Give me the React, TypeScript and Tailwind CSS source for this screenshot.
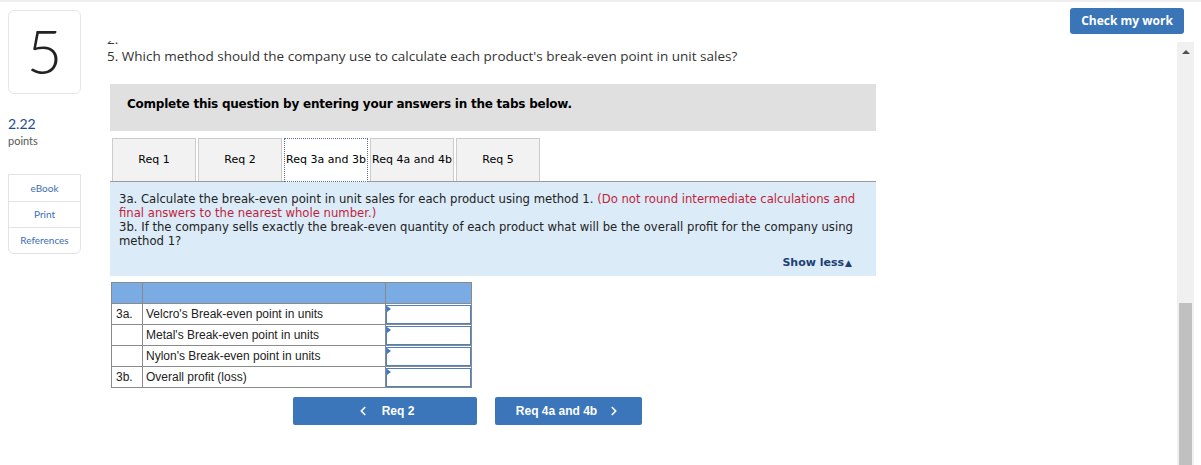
import { ChevronLeft, ChevronRight } from 'lucide-react'

const tabs = ['Req 1', 'Req 2', 'Req 3a and 3b', 'Req 4a and 4b', 'Req 5']

const rows = [
  { tag: '3a.', label: "Velcro's Break-even point in units" },
  { tag: '', label: "Metal's Break-even point in units" },
  { tag: '', label: "Nylon's Break-even point in units" },
  { tag: '3b.', label: 'Overall profit (loss)' },
]

function InputCell() {
  return (
    <td className="border border-[#8a8a8a] p-0 h-[21px]">
      <div className="relative h-[19px] border border-[#4f80bf] bg-white">
        <span className="absolute left-0 top-0 w-0 h-0 border-t-[3px] border-b-[3px] border-l-[4px] border-t-transparent border-b-transparent border-l-[#3f78c4]" />
      </div>
    </td>
  )
}

export default function App() {
  return (
    <div className="relative w-[1201px] h-[465px] overflow-hidden bg-white border-t-2 border-[#eeeeee] font-['Lato',sans-serif]">
      <div className="flex h-full">
        {/* left sidebar */}
        <div className="ml-[8px] w-[73px] pt-[8px] shrink-0">
          <div className="h-[84px] rounded-md border border-[#e6e6e6] flex items-center justify-center">
            <span className="text-[62px] font-light leading-none text-[#222] pb-[4px]">5</span>
          </div>
          <div className="mt-[22px] text-[14px] leading-[16px] text-[#1e4b8f]">2.22</div>
          <div className="mt-[2px] text-[11px] leading-[13px] text-[#555]">points</div>
          <div className="mt-[27px] rounded-b-md border border-[#e3e3e3] text-[10px] text-[#3d6db4]">
            <div className="h-[27px] flex items-center justify-center border-b border-[#e3e3e3]">eBook</div>
            <div className="h-[26px] flex items-center justify-center border-b border-[#e3e3e3]">Print</div>
            <div className="h-[25px] flex items-center justify-center">References</div>
          </div>
        </div>

        {/* main column */}
        <div className="ml-[26px] w-[769px] shrink-0">
          <div className="mt-[39px] h-[5px] overflow-hidden">
            <div className="-mt-[10px] text-[13.5px] leading-[16px] text-[#333] font-['Open_Sans',sans-serif]">2.</div>
          </div>
          <div className="mt-[2px] text-[13.5px] leading-[16px] text-[#333] font-['Open_Sans',sans-serif] whitespace-nowrap">
            5. Which method should the company use to calculate each product's break-even point in unit sales?
          </div>

          <div className="ml-[3px] mt-[20px] w-[766px] h-[47px] bg-[#e0e0e0] flex items-center pl-[17px] pb-[8px] font-['DejaVu_Sans',sans-serif] text-[12px] tracking-[-0.23px] font-bold text-black">
            Complete this question by entering your answers in the tabs below.
          </div>

          {/* tabs */}
          <div className="ml-[3px] mt-[7px] w-[766px] flex gap-[2px] pl-[2px] font-['DejaVu_Sans',sans-serif] text-[11px] text-black">
            {tabs.map((t, i) =>
              i === 2 ? (
                <div
                  key={t}
                  className="w-[84px] h-[44px] -mb-[1px] bg-white border border-dotted border-[#5a6e8c] flex items-center justify-center z-10 whitespace-nowrap"
                >
                  {t}
                </div>
              ) : (
                <div
                  key={t}
                  className="w-[84px] h-[43px] bg-[#f2f2f2] border border-[#cccccc] border-b-0 flex items-center justify-center whitespace-nowrap"
                >
                  {t}
                </div>
              )
            )}
          </div>

          {/* instructions panel */}
          <div className="ml-[3px] w-[766px] h-[95px] bg-[#dbebf8] border-t border-[#9a9a9a] pl-[9px] pr-[8px] pt-[10px] font-['DejaVu_Sans',sans-serif] text-[11.65px] leading-[14px] text-[#222] whitespace-nowrap">
            <div>
              3a. Calculate the break-even point in unit sales for each product using method 1.{' '}
              <span className="text-[#c41e3a]">(Do not round intermediate calculations and</span>
              <br />
              <span className="text-[#c41e3a]">final answers to the nearest whole number.)</span>
              <br />
              3b. If the company sells exactly the break-even quantity of each product what will be the overall profit for the company using
              <br />
              method 1?
            </div>
            <div className="mt-[8px] flex justify-end pr-[16px] text-[11px] font-bold text-[#1d3f72]">
              Show less<span className="text-[9px] ml-[1px]">▲</span>
            </div>
          </div>

          {/* table */}
          <table className="ml-[4px] mt-[6px] border-collapse font-['Liberation_Sans',Arial,sans-serif] text-[12px] text-[#222]">
            <thead>
              <tr className="bg-[#7aabe2] h-[21px]">
                <th className="w-[31px] border border-[#8a8a8a]" />
                <th className="w-[243px] border border-[#8a8a8a]" />
                <th className="w-[86px] border border-[#8a8a8a]" />
              </tr>
            </thead>
            <tbody>
              {rows.map((r) => (
                <tr key={r.label}>
                  <td className="border border-[#8a8a8a] pl-[4px] h-[21px] align-middle">{r.tag}</td>
                  <td className="border border-[#8a8a8a] pl-[3px] align-middle">{r.label}</td>
                  <InputCell />
                </tr>
              ))}
            </tbody>
          </table>

          {/* nav buttons */}
          <div className="mt-[9px] ml-[186px] flex gap-[18px] font-['Liberation_Sans',Arial,sans-serif] text-[12px] font-bold text-white">
            <button className="w-[184px] h-[28px] bg-[#3a76b9] rounded-[2px] flex items-center justify-center gap-[12px]">
              <ChevronLeft className="w-[14px] h-[14px]" strokeWidth={3} />
              Req 2
            </button>
            <button className="w-[147px] h-[28px] bg-[#3a76b9] rounded-[2px] flex items-center justify-center gap-[10px]">
              Req 4a and 4b
              <ChevronRight className="w-[14px] h-[14px]" strokeWidth={3} />
            </button>
          </div>
        </div>

        {/* right column */}
        <div className="ml-auto w-[131px] flex flex-col">
          <button className="mt-[6px] w-[114px] h-[26px] bg-[#3a75b8] rounded-[3px] text-white text-[12px] font-bold font-['Open_Sans',sans-serif]">
            Check my work
          </button>
          <div className="ml-[107px] mt-[8px] w-[17px] flex-1 bg-[#f0f0f0] flex flex-col items-center">
            <span className="mt-[8px] w-0 h-0 border-l-[4px] border-r-[4px] border-b-[4px] border-l-transparent border-r-transparent border-b-[#505050]" />
            <div className="mt-[249px] w-[13px] flex-1 bg-[#c0c0c0]" />
          </div>
        </div>
      </div>
    </div>
  )
}
